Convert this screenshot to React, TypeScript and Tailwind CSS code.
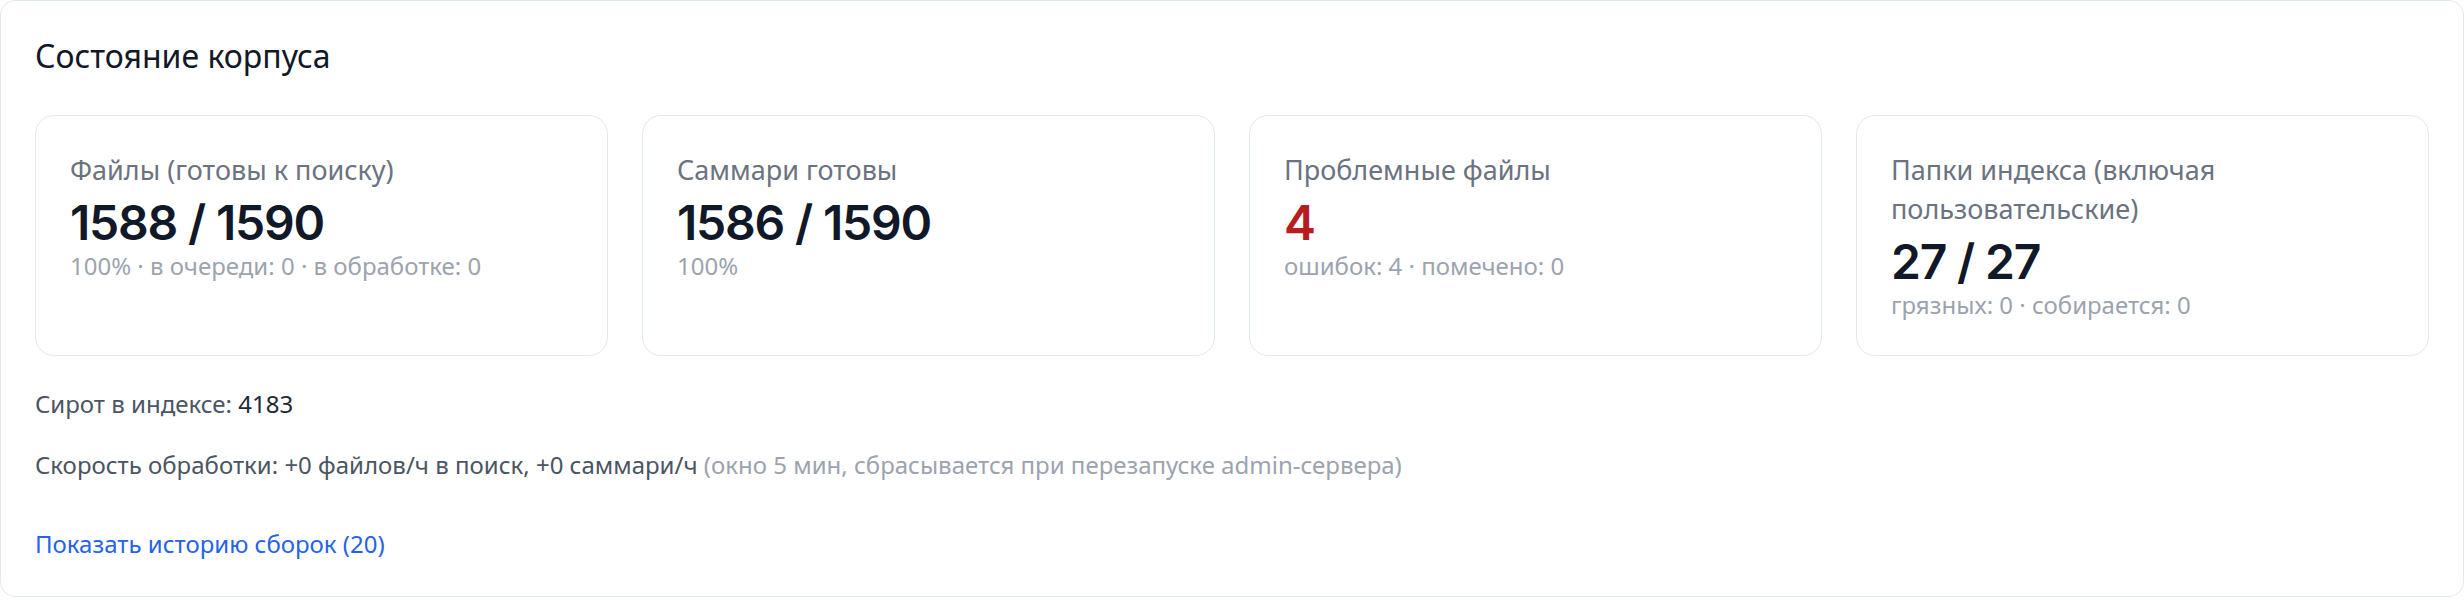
import React from "react";

type Stat = {
  label: string;
  value: string;
  sub: string;
  danger?: boolean;
};

const stats: Stat[] = [
  {
    label: "Файлы (готовы к поиску)",
    value: "1588 / 1590",
    sub: "100% · в очереди: 0 · в обработке: 0",
  },
  { label: "Саммари готовы", value: "1586 / 1590", sub: "100%" },
  {
    label: "Проблемные файлы",
    value: "4",
    sub: "ошибок: 4 · помечено: 0",
    danger: true,
  },
  {
    label: "Папки индекса (включая пользовательские)",
    value: "27 / 27",
    sub: "грязных: 0 · собирается: 0",
  },
];

const StatCard = ({ stat }: { stat: Stat }) => (
  <div className="rounded-[19px] border border-[#e2e8f0] bg-white p-[34px]">
    <div className="text-[27px] leading-[39px] text-[#6b7280]">
      {stat.label}
    </div>
    <div
      className={
        "mt-[5px] font-['Inter',sans-serif] text-[48px] leading-[58px] font-semibold tracking-tight " +
        (stat.danger ? "text-[#b91c1c]" : "text-[#111827]")
      }
    >
      {stat.value}
    </div>
    <div className="mt-[-3px] text-[24px] leading-[33px] text-[#9ca3af]">
      {stat.sub}
    </div>
  </div>
);

export default function App() {
  return (
    <div className="bg-white font-['Noto_Sans',sans-serif]">
      <section className="rounded-[15px] border border-[#e2e8f0] bg-white px-[34px] pt-[34px] pb-[36px]">
        <h2 className="text-[32px] leading-[42px] text-[#111827]">
          Состояние корпуса
        </h2>

        <div className="mt-[38px] grid grid-cols-4 gap-[34px]">
          {stats.map((s) => (
            <StatCard key={s.label} stat={s} />
          ))}
        </div>

        <p className="mt-[31px] text-[24px] leading-[33px] text-[#4b5563]">
          Сирот в индексе: <span className="text-[#1f2937]">4183</span>
        </p>

        <p className="mt-[28px] text-[24px] leading-[33px] text-[#4b5563]">
          Скорость обработки: +0 файлов/ч в поиск, +0 саммари/ч{" "}
          <span className="text-[#9ca3af]">
            (окно 5 мин, сбрасывается при перезапуске admin-сервера)
          </span>
        </p>

        <div className="mt-[46px]">
          <button className="text-[24px] leading-[33px] text-[#2563eb]">
            Показать историю сборок (20)
          </button>
        </div>
      </section>
    </div>
  );
}
